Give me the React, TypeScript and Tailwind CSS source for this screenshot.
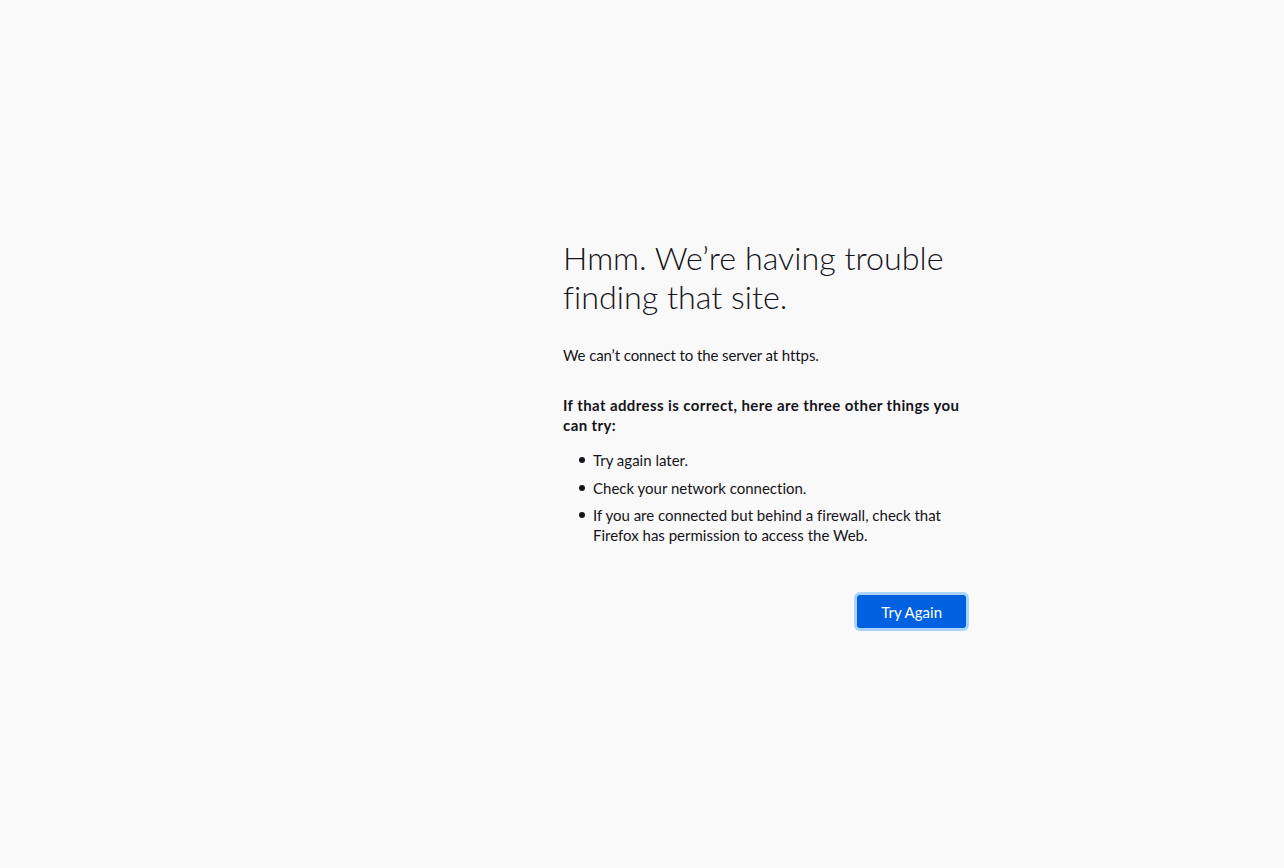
export default function App() {
  const items = [
    "Try again later.",
    "Check your network connection.",
    "If you are connected but behind a firewall, check that Firefox has permission to access the Web.",
  ];

  return (
    <div
      className="min-h-screen w-full bg-[#f9f9f9] text-[#15141a] [font-variant-ligatures:none]"
      style={{ fontFamily: '"Segoe UI", Lato, "Noto Sans", sans-serif' }}
    >
      <div className="pl-[563px] pt-[238px]">
        <div className="w-[405px]">
          <h1 className="text-[32.3px] font-light leading-[39px]">
            Hmm. We’re having trouble finding that site.
          </h1>

          <p className="mt-[29px] text-[15px] leading-[20px] tracking-[-0.1px]">
            We can’t connect to the server at https.
          </p>

          <p className="mt-[30px] text-[15px] font-bold leading-[20px] tracking-[0.4px]">
            If that address is correct, here are three other things you can try:
          </p>

          <ul className="mt-[15px] flex flex-col gap-[7.5px] text-[15px] leading-[20px]">
            {items.map((t, i) => (
              <li key={`item${i}`} className="flex">
                <span className="flex w-[30px] shrink-0 justify-end pr-[8px] pt-[7px]">
                  <span className="h-[6px] w-[6px] rounded-full bg-[#15141a]" />
                </span>
                <span>{t}</span>
              </li>
            ))}
          </ul>

          <div className="mt-[50px] flex justify-end pr-[2px]">
            <button className="h-[33px] rounded-[3px] bg-[#0061e0] px-[24px] pt-[1px] text-[15px] text-white shadow-[0_0_0_3px_rgba(10,132,255,0.32)]">
              Try Again
            </button>
          </div>
        </div>
      </div>
    </div>
  );
}
